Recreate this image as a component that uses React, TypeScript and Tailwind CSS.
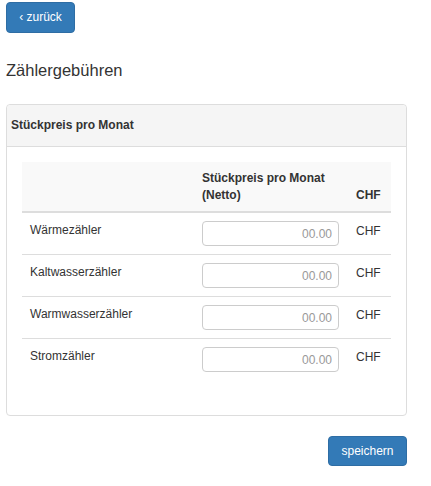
const meters = ["Wärmezähler", "Kaltwasserzähler", "Warmwasserzähler", "Stromzähler"];

export default function App() {
  return (
    <div className="w-[431px] bg-white px-[6px] pt-[2px] pb-[19px] font-['Liberation_Sans',Arial,sans-serif] text-[12px] leading-[17px] text-[#333]">
      <button className="h-[31px] w-[69px] rounded-[4px] border border-[#2e6da4] bg-[#337ab7] text-[12px] text-white">
        ‹ zurück
      </button>

      <h4 className="mt-[27px] text-[16.5px] leading-[20px] font-normal">Zählergebühren</h4>

      <div className="mt-[24px] w-[401px] rounded-[4px] border border-[#ddd]">
        <div className="rounded-t-[4px] border-b border-[#ddd] bg-[#f5f5f5] py-[12px] pl-[4px] font-bold">
          Stückpreis pro Monat
        </div>

        <div className="p-[15px]">
          <table className="mb-[20px] w-full table-fixed border-collapse">
            <colgroup>
              <col className="w-[172px]" />
              <col className="w-[154px]" />
              <col />
            </colgroup>
            <thead>
              <tr className="bg-[#f9f9f9]">
                <th className="border-b-2 border-[#ddd] px-[8px] pt-[8px] pb-[7px]" />
                <th className="border-b-2 border-[#ddd] px-[8px] pt-[8px] pb-[7px] text-left align-bottom font-bold">
                  Stückpreis pro Monat (Netto)
                </th>
                <th className="border-b-2 border-[#ddd] px-[8px] pt-[8px] pb-[7px] text-left align-bottom font-bold">
                  CHF
                </th>
              </tr>
            </thead>
            <tbody>
              {meters.map((m, i) => (
                <tr key={m} className={i > 0 ? "border-t border-[#ddd]" : ""}>
                  <td className="p-[8px] pt-[9px] align-top">{m}</td>
                  <td className="p-[8px] align-top">
                    <input
                      type="text"
                      placeholder="00.00"
                      className="block h-[25px] w-[137px] rounded-[4px] border border-[#ccc] bg-white pr-[6px] text-right text-[12px] placeholder:text-[#999] focus:outline-none"
                    />
                  </td>
                  <td className="p-[8px] pt-[10px] align-top">CHF</td>
                </tr>
              ))}
            </tbody>
          </table>
        </div>
      </div>

      <div className="mt-[20px] flex w-[401px] justify-end">
        <button className="h-[30px] w-[79px] rounded-[4px] border border-[#2e6da4] bg-[#337ab7] text-[12px] text-white">
          speichern
        </button>
      </div>
    </div>
  );
}
